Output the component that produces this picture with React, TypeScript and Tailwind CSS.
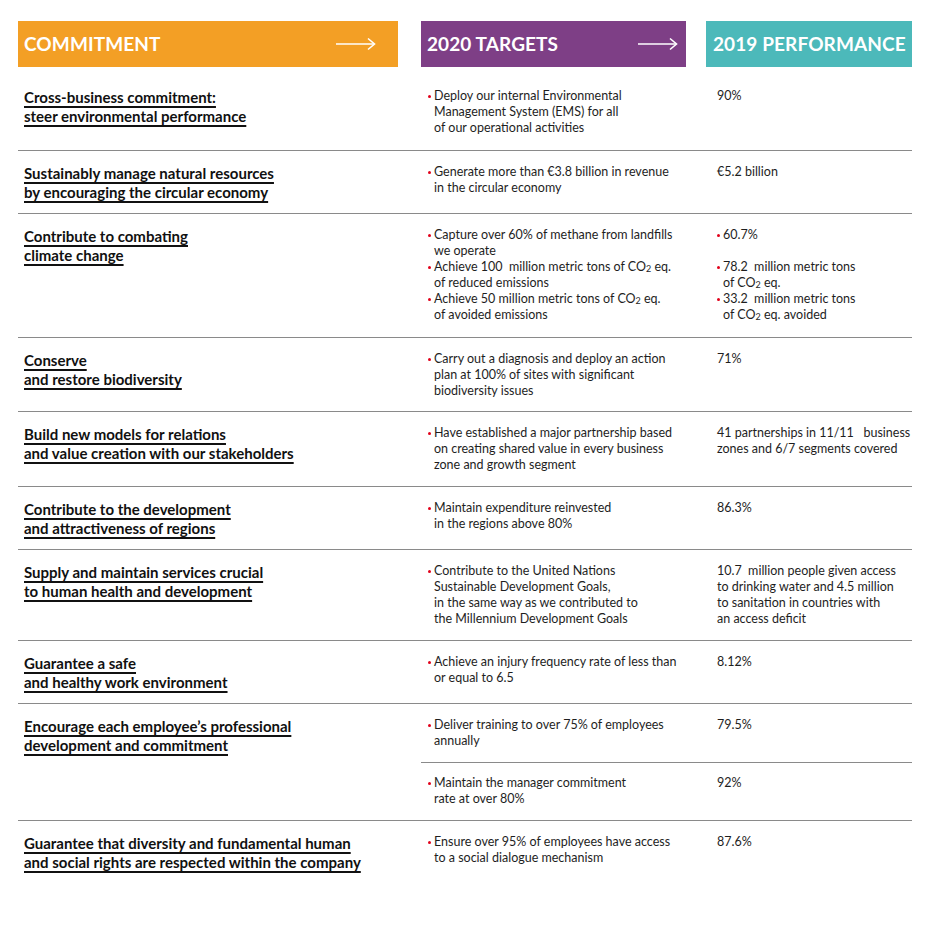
import React from "react";

const Arrow = () => (
  <svg width="40" height="14" viewBox="0 0 40 14" fill="none">
    <line x1="0" y1="7" x2="38" y2="7" stroke="white" strokeWidth="1.6" />
    <polyline points="32,1.5 38.5,7 32,12.5" stroke="white" strokeWidth="1.6" fill="none" />
  </svg>
);

const Dot = () => (
  <span className="flex w-[6px] shrink-0 h-[16px] items-center">
    <span className="block w-[3px] h-[3px] rounded-full bg-[#e2001a]" />
  </span>
);

const Bullet = ({ children }: { children: React.ReactNode }) => (
  <div className="flex items-start">
    <Dot />
    <div className="flex-1">{children}</div>
  </div>
);

const CO2 = () => (
  <>
    CO<sub className="text-[9px] relative top-[1px] align-baseline">2</sub>
  </>
);

type RowProps = {
  h: string;
  pt?: string;
  title: React.ReactNode;
  targets: React.ReactNode;
  perf: React.ReactNode;
  border?: boolean;
};

const Title = ({ children }: { children: React.ReactNode }) => (
  <div className="font-bold text-[15px] leading-[19px] text-[#111] underline decoration-2 underline-offset-[3px]">
    {children}
  </div>
);

const Row = ({ h, pt = "pt-[13px]", title, targets, perf, border = true }: RowProps) => (
  <div className={`grid grid-cols-[403px_285px_206px] ${h} ${border ? "border-b border-[#8a8a8a]" : ""}`}>
    <div className={`pl-[6px] ${pt}`}>
      <Title>{title}</Title>
    </div>
    <div className={`pl-[7px] ${pt}`}>{targets}</div>
    <div className={`pl-[11px] ${pt}`}>{perf}</div>
  </div>
);

export default function App() {
  return (
    <div
      className="w-[930px] h-[943px] bg-white text-[#1e1e1e] text-[12.5px] leading-[16px]"
      style={{ fontFamily: "Lato, 'Noto Sans', sans-serif" }}
    >
      <div className="pl-[18px] pt-[21px] w-[912px]">
        {/* header */}
        <div className="flex h-[46px]">
          <div className="w-[380px] bg-[#f39f25] flex items-center justify-between pl-[6px] pr-[22px]">
            <span className="text-white font-bold text-[19px] tracking-[0.1px]">COMMITMENT</span>
            <Arrow />
          </div>
          <div className="w-[23px]" />
          <div className="w-[265px] bg-[#7e3f86] flex items-center justify-between pl-[6px] pr-[8px]">
            <span className="text-white font-bold text-[19px] tracking-[0.1px]">2020 TARGETS</span>
            <Arrow />
          </div>
          <div className="w-[20px]" />
          <div className="w-[206px] bg-[#4cb9ba] flex items-center pl-[7px]">
            <span className="text-white font-bold text-[19px] tracking-[0.1px]">2019 PERFORMANCE</span>
          </div>
        </div>

        <Row
          h="h-[84px]"
          pt="pt-[21px]"
          title={<>Cross-business commitment:<br />steer environmental performance</>}
          targets={
            <Bullet>
              Deploy our internal Environmental<br />Management System (EMS) for all<br />of our operational activities
            </Bullet>
          }
          perf={<div>90%</div>}
        />
        <Row
          h="h-[63px]"
          title={<>Sustainably manage natural resources<br />by encouraging the circular economy</>}
          targets={
            <Bullet>
              Generate more than €3.8 billion in revenue<br />in the circular economy
            </Bullet>
          }
          perf={<div>€5.2 billion</div>}
        />
        <Row
          h="h-[124px]"
          title={<>Contribute to combating<br />climate change</>}
          targets={
            <div>
              <Bullet>
                Capture over 60% of methane from landfills<br />we operate
              </Bullet>
              <Bullet>
                Achieve 100&nbsp; million metric tons of <CO2 /> eq.<br />of reduced emissions
              </Bullet>
              <Bullet>
                Achieve 50 million metric tons of <CO2 /> eq.<br />of avoided emissions
              </Bullet>
            </div>
          }
          perf={
            <div>
              <Bullet>60.7%</Bullet>
              <div className="h-[16px]" />
              <Bullet>
                78.2&nbsp; million metric tons<br />of <CO2 /> eq.
              </Bullet>
              <Bullet>
                33.2&nbsp; million metric tons<br />of <CO2 /> eq. avoided
              </Bullet>
            </div>
          }
        />
        <Row
          h="h-[74px]"
          title={<>Conserve<br />and restore biodiversity</>}
          targets={
            <Bullet>
              Carry out a diagnosis and deploy an action<br />plan at 100% of sites with significant<br />biodiversity issues
            </Bullet>
          }
          perf={<div>71%</div>}
        />
        <Row
          h="h-[75px]"
          title={<>Build new models for relations<br />and value creation with our stakeholders</>}
          targets={
            <Bullet>
              Have established a major partnership based<br />on creating shared value in every business<br />zone and growth segment
            </Bullet>
          }
          perf={
            <div className="whitespace-pre">
              {"41 partnerships in 11/11   business\nzones and 6/7 segments covered"}
            </div>
          }
        />
        <Row
          h="h-[63px]"
          title={<>Contribute to the development<br />and attractiveness of regions</>}
          targets={
            <Bullet>
              Maintain expenditure reinvested<br />in the regions above 80%
            </Bullet>
          }
          perf={<div>86.3%</div>}
        />
        <Row
          h="h-[91px]"
          title={<>Supply and maintain services crucial<br />to human health and development</>}
          targets={
            <Bullet>
              Contribute to the United Nations<br />Sustainable Development Goals,<br />in the same way as we contributed to<br />the Millennium Development Goals
            </Bullet>
          }
          perf={
            <div>
              10.7&nbsp; million people given access<br />to drinking water and 4.5 million<br />to sanitation in countries with<br />an access deficit
            </div>
          }
        />
        <Row
          h="h-[63px]"
          title={<>Guarantee a safe<br />and healthy work environment</>}
          targets={
            <Bullet>
              Achieve an injury frequency rate of less than<br />or equal to 6.5
            </Bullet>
          }
          perf={<div>8.12%</div>}
        />

        {/* split row */}
        <div className="grid grid-cols-[403px_491px] h-[117px] border-b border-[#8a8a8a]">
          <div className="pl-[6px] pt-[13px]">
            <Title>
              Encourage each employee’s professional<br />development and commitment
            </Title>
          </div>
          <div>
            <div className="grid grid-cols-[285px_206px] h-[59px] border-b border-[#8a8a8a]">
              <div className="pl-[7px] pt-[13px]">
                <Bullet>
                  Deliver training to over 75% of employees<br />annually
                </Bullet>
              </div>
              <div className="pl-[11px] pt-[13px]">79.5%</div>
            </div>
            <div className="grid grid-cols-[285px_206px] h-[57px]">
              <div className="pl-[7px] pt-[12px]">
                <div className="flex items-start">
                  <Dot />
                  <span>Maintain the manager commitment</span>
                </div>
                <div className="pl-[6px]">rate at over 80%</div>
              </div>
              <div className="pl-[11px] pt-[12px]">92%</div>
            </div>
          </div>
        </div>

        <Row
          h="h-[80px]"
          border={false}
          title={<>Guarantee that diversity and fundamental human<br />and social rights are respected within the company</>}
          targets={
            <Bullet>
              Ensure over 95% of employees have access<br />to a social dialogue mechanism
            </Bullet>
          }
          perf={<div>87.6%</div>}
        />
      </div>
    </div>
  );
}
